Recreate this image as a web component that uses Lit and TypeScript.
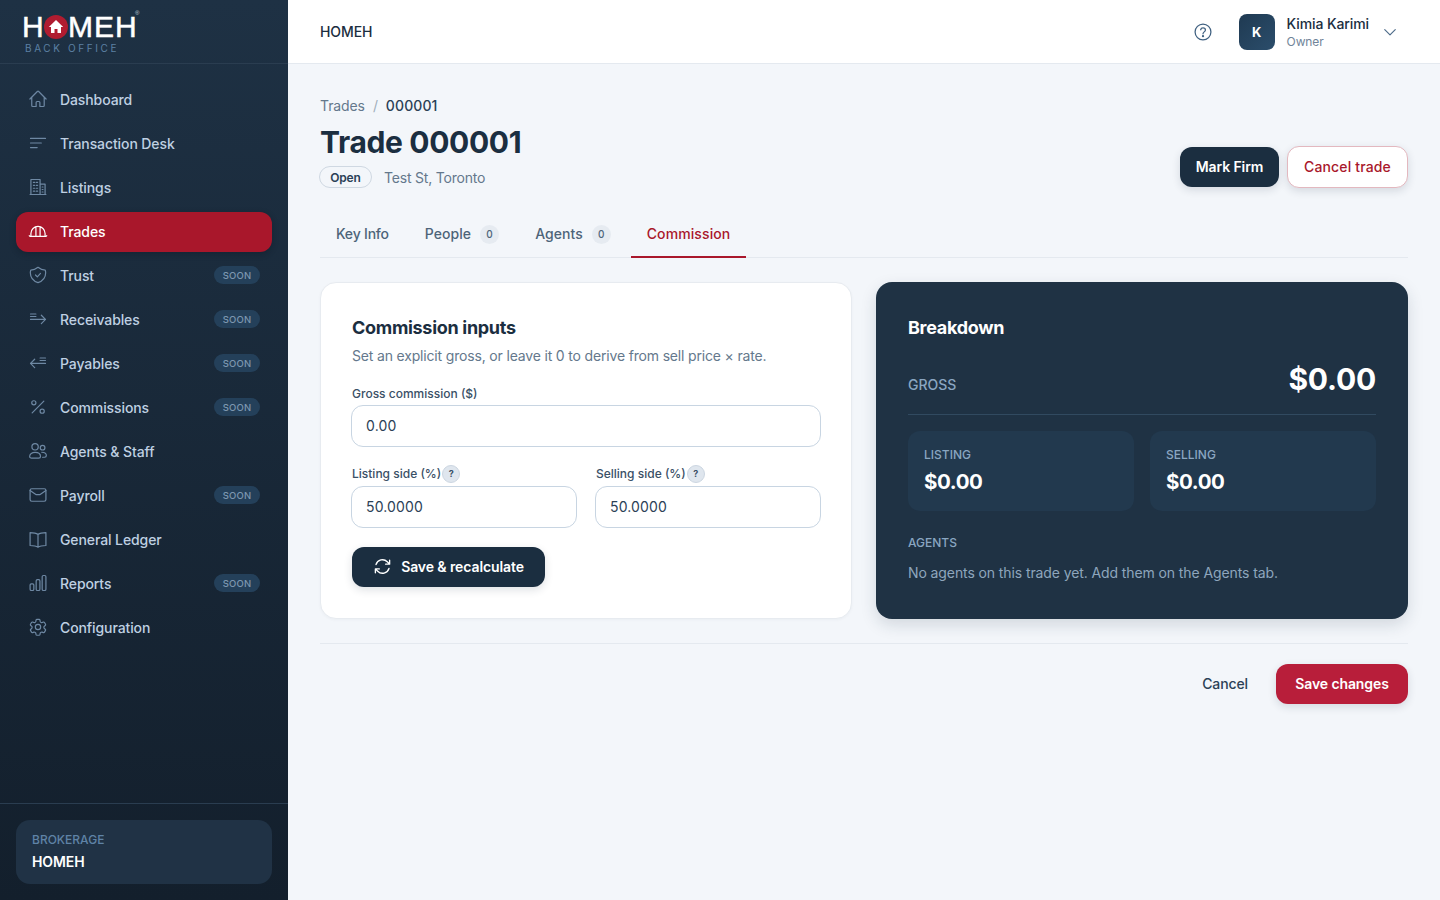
import { LitElement, html, css, svg } from "lit";
import { customElement } from "lit/decorators.js";

const ic = (b: any) => html`<svg class="ic" viewBox="0 0 24 24" fill="none" stroke="currentColor" stroke-width="1.45" stroke-linecap="round" stroke-linejoin="round">${b}</svg>`;
const icons: Record<string, any> = {
  home: svg`<path d="M2.300 12 11.200 3c.5-.4 1.200-.4 1.600 0l8.900 9M4.500 9.800v10c0 .6.500 1.200 1.100 1.200H9.750v-4.900c0-.6.500-1.100 1.100-1.100h2.300c.6 0 1.100.500 1.100 1.100V21h4.100c.6 0 1.100-.600 1.100-1.200v-10"/>`,
  desk: svg`<path d="M3 6.500h18M3 12h13M3 17.500h8"/>`,
  list: svg`<path d="M2.500 21h19M3.500 21V3h11v18M14.500 8.500h6V21M6.500 6.500h1.500M10 6.500h1.500M6.500 10h1.500M10 10h1.500M6.500 13.500h1.500M10 13.500h1.500M6.500 17h1.500M10 17h1.500M17 12h1M17 15h1M17 18h1"/>`,
  trade: svg`<path d="M1.500 17.500c0 .6.400 1 1 1h19c.6 0 1-.4 1-1M3.500 18v-3a8.500 8.500 0 0 1 17 0v3M9.500 17.500V7M14.500 17.500V7"/>`,
  trust: svg`<path d="M12 2.800c2.600 2.200 5.500 3.300 8.700 3.300.3 1 .5 2 .5 3.200 0 5.500-3.800 10-9.200 11.900C6.600 19.300 2.800 14.800 2.800 9.300c0-1.100.2-2.200.5-3.200 3.200 0 6.100-1.100 8.700-3.300Z"/><path d="m9 12 2.200 2.200L15 10"/>`,
  recv: svg`<path d="M3 6h6.500M3 9h6.500M3 12.500h18M16 7.500l5 5-5 5"/>`,
  pay: svg`<path d="M14.500 6H21M14.500 9H21M3 12.500h18M8 7.500l-5 5 5 5"/>`,
  pct: svg`<path d="M19 5 5 19"/><circle cx="7" cy="7" r="2.500"/><circle cx="17" cy="17" r="2.500"/>`,
  agents: svg`<circle cx="8.500" cy="7" r="3.800"/><circle cx="17.500" cy="8" r="2.800"/><path d="M2 18.500c0-2.900 2.800-4.800 6.500-4.800s6.500 1.900 6.500 4.800c0 1.200-1 2-2.200 2H4.200c-1.200 0-2.200-.8-2.200-2ZM16.500 13.500c3.200 0 5.500 1.600 5.500 4 0 1.200-.9 2-2 2h-2.500"/>`,
  payroll: svg`<rect x="2.500" y="4.500" width="19" height="15" rx="2"/><path d="M2.500 6.500 9 11c.6.400 1.300.500 1.500.500h3c.3 0 .9-.1 1.500-.5l6.500-4.500"/>`,
  ledger: svg`<path d="M12 6.500C10 5 7 4.300 2.500 4.300v15.500c4.500 0 7.500.6 9.500 2 2-1.400 5-2 9.500-2V4.300C17 4.300 14 5 12 6.500Zm0 0v15.300"/>`,
  reports: svg`<rect x="2.500" y="13" width="4.500" height="8" rx="1.500"/><rect x="9.800" y="8" width="4.500" height="13" rx="1.500"/><rect x="17" y="3" width="4.500" height="18" rx="1.500"/>`,
  config: svg`<path d="M9.600 3.900c.1-.6.600-1 1.200-1h2.400c.6 0 1.100.4 1.200 1l.2 1.400c.1.400.4.700.7.900l.5.300c.4.200.8.200 1.200.1l1.300-.5c.6-.2 1.200 0 1.500.5l1.200 2.100c.3.500.2 1.100-.3 1.500l-1.100.9c-.3.200-.5.600-.5 1v.6c0 .4.200.8.500 1l1.100.9c.5.400.6 1 .3 1.500l-1.200 2.100c-.3.500-.9.700-1.500.5l-1.300-.5c-.4-.1-.8-.1-1.200.1l-.5.300c-.3.200-.6.500-.7.900l-.2 1.400c-.1.600-.6 1-1.200 1h-2.400c-.6 0-1.100-.4-1.200-1l-.2-1.400c-.1-.4-.4-.7-.7-.9l-.5-.3c-.4-.2-.8-.2-1.200-.1l-1.300.5c-.6.200-1.200 0-1.500-.5l-1.200-2.100c-.3-.5-.2-1.100.3-1.500l1.100-.9c.3-.2.500-.6.500-1v-.6c0-.4-.2-.8-.5-1l-1.100-.9c-.5-.4-.6-1-.3-1.500l1.200-2.100c.3-.5.900-.7 1.500-.5l1.300.5c.4.100.8.100 1.200-.1l.5-.3c.3-.2.600-.5.700-.9Z"/><circle cx="12" cy="12" r="3.200"/>`,
};

const nav = [
  ["home", "Dashboard", 0], ["desk", "Transaction Desk", 0], ["list", "Listings", 0], ["trade", "Trades", 0],
  ["trust", "Trust", 1], ["recv", "Receivables", 1], ["pay", "Payables", 1], ["pct", "Commissions", 1],
  ["agents", "Agents & Staff", 0], ["payroll", "Payroll", 1], ["ledger", "General Ledger", 0], ["reports", "Reports", 1], ["config", "Configuration", 0],
] as const;

@customElement("app-root")
export class AppRoot extends LitElement {
  static styles = css`
    :host { display: block; width: 1440px; height: 900px; overflow: hidden; background: #f3f6fa; font-family: "Inter", "Noto Sans", sans-serif; color: #1b2e40; letter-spacing: -0.1px; }
    * { box-sizing: border-box; }
    .shell { display: flex; height: 900px; }
    .side { width: 288px; flex: none; display: flex; flex-direction: column; background: linear-gradient(180deg, #1e3144 0%, #131f2c 100%); }
    .brand { height: 64px; flex: none; border-bottom: 1px solid #2a3d50; padding: 13px 0 0 22px; }
    .logo { display: flex; align-items: center; height: 27px; color: #fff; font: 400 30px/27px "Liberation Sans", sans-serif; letter-spacing: 0; position: relative; width: 118px; -webkit-text-stroke: 0.5px #fff; }
    .logo .dot { width: 24px; height: 24px; flex: none; margin-left: 0.3px; }
    .logo .rest { letter-spacing: 1px; }
    .logo sup { position: absolute; left: 113px; top: -3px; font-size: 6px; line-height: 6px; color: #c5ced8; -webkit-text-stroke: 0; }
    .bo { font: 400 10px/12px "Inter", sans-serif; letter-spacing: 2.6px; color: #5c80a3; margin: 2px 0 0 3px; }
    nav { flex: 1; padding: 16px 16px 0; display: flex; flex-direction: column; gap: 4px; }
    .item { height: 40px; border-radius: 12px; display: flex; align-items: center; padding: 0 12px 2px 12px; gap: 12px; font-size: 14px; font-weight: 500; color: #bfd0e2; }
    .item .ic { width: 20px; height: 20px; color: #6e88a3; flex: none; }
    .item .lbl { flex: 1; }
    .item.active { background: #a9172b; color: #fff; box-shadow: 0 2px 6px rgba(10,15,25,.3); }
    .item.active .ic { color: #fff; }
    .soon { width: 46px; height: 18px; border-radius: 9px; background: #24405a; color: #7d97b0; font-size: 9.5px; font-weight: 500; display: flex; align-items: center; justify-content: center; letter-spacing: .2px; }
    .foot { height: 97px; flex: none; border-top: 1px solid #2a3d50; padding: 16px; }
    .bk { height: 64px; border-radius: 14px; background: #203245; padding: 12px 16px; }
    .bk .a { font-size: 12px; line-height: 16px; font-weight: 500; color: #5f83a6; letter-spacing: 0; }
    .bk .b { font-size: 14px; line-height: 20px; font-weight: 600; color: #fff; margin-top: 4px; }
    .main { flex: 1; display: flex; flex-direction: column; min-width: 0; }
    header { height: 64px; flex: none; background: #fff; border-bottom: 1px solid #e4e9ef; display: flex; align-items: center; padding: 0 32px; font-size: 14px; font-weight: 500; }
    header .t { flex: 1; }
    .help { width: 20px; height: 20px; color: #3f6080; margin-right: 26px; }
    .user { display: flex; align-items: center; gap: 12px; }
    .who { padding-top: 2px; }
    .av { width: 36px; height: 36px; border-radius: 8px; background: linear-gradient(135deg, #1f3a52, #2b4d6b); color: #fff; font-size: 13px; font-weight: 700; display: flex; align-items: center; justify-content: center; }
    .nm { font-size: 14px; line-height: 18px; font-weight: 500; color: #1b2e40; }
    .rl { font-size: 12px; line-height: 16px; font-weight: 400; color: #708499; margin-top: 1px; }
    .chev { width: 14px; height: 14px; color: #4f6d8a; margin: 0 11px 0 2px; }
    .content { flex: 1; padding: 32px 32px 0; }
    .head { display: flex; justify-content: space-between; align-items: flex-end; height: 94px; }
    .head > div:first-child { align-self: flex-start; }
    .crumb { font-size: 14px; line-height: 20px; color: #64788c; display: flex; gap: 8px; }
    .crumb b { font-weight: 500; color: #2b4156; letter-spacing: .1px; }
    .crumb i { font-style: normal; color: #a0aebb; }
    h1 { margin: 8px 0 6px; font-size: 30px; line-height: 36px; font-weight: 700; color: #1b2e40; letter-spacing: -0.35px; }
    .meta { display: flex; align-items: center; gap: 12px; font-size: 14px; color: #64788c; letter-spacing: -0.2px; }
    .pill { margin-left: -1px; width: 53px; height: 22px; border: 1px solid #cfd8e2; border-radius: 11px; display: flex; align-items: center; justify-content: center; font-size: 12px; font-weight: 600; color: #2b4156; }
    .acts { display: flex; gap: 8px; margin-bottom: 2px; }
    .btn { height: 40px; border-radius: 12px; display: flex; align-items: center; justify-content: center; padding-bottom: 2px; font-size: 14px; font-weight: 600; box-shadow: 0 3px 8px rgba(27,46,64,.14); }
    .dark { background: #1b2e40; color: #fff; }
    .mf { width: 99px; }
    .ct { width: 121px; height: 42px; margin-top: -1px; background: #fff; color: #a9172b; border: 1px solid #e3b8bf; font-weight: 500; letter-spacing: .15px; }
    .tabs { display: flex; gap: 4px; height: 46px; margin-top: 22px; border-bottom: 1px solid #e4e9ef; font-size: 14px; font-weight: 500; color: #4d6479; letter-spacing: 0.05px; }
    .tab { padding: 0 16px 2px; display: flex; align-items: center; gap: 9px; height: 46px; border-bottom: 2px solid transparent; }
    .tab:first-child { letter-spacing: -0.2px; }
    .tab.on { color: #a9172b; border-bottom-color: #a9172b; letter-spacing: .1px; }
    .cnt { width: 19px; height: 19px; border-radius: 50%; background: #e6ebf1; font-size: 10px; display: flex; align-items: center; justify-content: center; margin-top: 2px; }
    .grid { display: grid; grid-template-columns: 1fr 1fr; gap: 24px; margin-top: 24px; height: 337px; }
    .card { border-radius: 16px; padding: 32px; }
    .light { background: #fff; border: 1px solid #e7ebf0; box-shadow: 0 1px 3px rgba(27,46,64,.04); padding: 31px 30px; }
    .light h2, .light .sub, .lab { padding-left: 1px; }
    h2 { margin: 0; font-size: 18px; line-height: 28px; font-weight: 700; letter-spacing: -0.3px; }
    .sub { font-size: 14px; line-height: 20px; color: #64788c; margin-top: 4px; letter-spacing: -0.17px; }
    .lab { display: flex; align-items: center; gap: 1px; font-size: 12px; line-height: 16px; font-weight: 500; color: #3a5066; height: 18px; letter-spacing: 0; }
    .q { width: 18px; height: 18px; border-radius: 50%; background: #dfe6ee; border: 1px solid #ccd6e1; font-size: 9px; font-weight: 700; display: flex; align-items: center; justify-content: center; color: #3a5066; }
    .inp { height: 42px; border: 1px solid #c8d5e2; border-radius: 12px; background: #fff; display: flex; align-items: center; padding: 0 14px 2px; font-size: 14px; color: #2b4156; margin-top: 3px; letter-spacing: .15px; }
    .f1 { margin-top: 19px; }
    .f1 .inp { margin-top: 2px; }
    .two { display: grid; grid-template-columns: 1fr 1fr; gap: 18px; margin-top: 18px; }
    .sv { width: 193px; height: 40px; margin: 19px 0 0 1px; gap: 9px; }
    .sv svg { width: 19px; height: 19px; }
    .bd { background: #1f3244; color: #fff; box-shadow: 0 6px 16px rgba(27,46,64,.15); }
    .gr { display: flex; justify-content: space-between; align-items: flex-start; border-bottom: 1px solid #314a60; margin-top: 19px; padding-bottom: 17px; }
    .gr .l { font-size: 14px; line-height: 18px; margin-top: 15px; font-weight: 500; color: #8aa6c1; letter-spacing: 0; }
    .gr .v { font-size: 30px; line-height: 36px; font-weight: 700; letter-spacing: -0.2px; }
    .sp { display: grid; grid-template-columns: 1fr 1fr; gap: 16px; margin-top: 16px; }
    .sc { height: 80px; border-radius: 12px; background: #22394e; padding: 16px; }
    .sc .l { font-size: 12px; line-height: 16px; font-weight: 500; color: #8aa6c1; letter-spacing: 0; }
    .sc .v { font-size: 20.5px; line-height: 28px; font-weight: 700; margin-top: 5px; letter-spacing: -0.4px; }
    .ag { font-size: 12px; line-height: 16px; font-weight: 500; color: #8aa6c1; margin-top: 24px; letter-spacing: 0; }
    .no { font-size: 14px; line-height: 20px; color: #8ea6bd; margin-top: 12px; }
    .end { margin-top: 24px; border-top: 1px solid #e4e9ef; padding-top: 20px; display: flex; justify-content: flex-end; align-items: center; gap: 28px; }
    .cancel { font-size: 14px; font-weight: 500; color: #2b4156; padding-bottom: 2px; }
    .save { width: 132px; background: #b81e3a; color: #fff; }
  `;

  private field(label: string, val: string, q = false) {
    return html`<div><div class="lab">${label}${q ? html`<span class="q">?</span>` : ""}</div><div class="inp">${val}</div></div>`;
  }

  render() {
    return html`<div class="shell">
      <aside class="side">
        <div class="brand">
          <div class="logo">H<svg class="dot" viewBox="0 0 24 24"><circle cx="12" cy="12" r="12" fill="#b01c30"/><path d="M12 5 4.800 12h2.200v6h3.500v-4h3v4H17v-6h2.200Z" fill="#fff"/></svg><span class="rest">MEH</span><sup>®</sup></div>
          <div class="bo">BACK OFFICE</div>
        </div>
        <nav>
          ${nav.map(([i, l, s]) => html`<div class="item ${l === "Trades" ? "active" : ""}">${ic(icons[i])}<span class="lbl">${l}</span>${s ? html`<span class="soon">SOON</span>` : ""}</div>`)}
        </nav>
        <div class="foot"><div class="bk"><div class="a">BROKERAGE</div><div class="b">HOMEH</div></div></div>
      </aside>
      <div class="main">
        <header>
          <div class="t">HOMEH</div>
          <svg class="help" viewBox="0 0 24 24" fill="none" stroke="currentColor" stroke-width="1.5" stroke-linecap="round"><circle cx="12" cy="12" r="9.500"/><path d="M9.200 9.300c.3-1.400 1.400-2.200 2.800-2.200 1.600 0 2.900 1 2.900 2.500 0 2.300-2.900 2.200-2.900 4.500"/><circle cx="12" cy="17" r=".6" fill="currentColor"/></svg>
          <div class="user">
            <div class="av">K</div>
            <div class="who"><div class="nm">Kimia Karimi</div><div class="rl">Owner</div></div>
            <svg class="chev" viewBox="0 0 24 24" fill="none" stroke="currentColor" stroke-width="2" stroke-linecap="round" stroke-linejoin="round"><path d="m3 8 9 9 9-9"/></svg>
          </div>
        </header>
        <div class="content">
          <div class="head">
            <div>
              <div class="crumb"><span>Trades</span><i>/</i><b>000001</b></div>
              <h1>Trade 000001</h1>
              <div class="meta"><span class="pill">Open</span><span>Test St, Toronto</span></div>
            </div>
            <div class="acts"><div class="btn dark mf">Mark Firm</div><div class="btn ct">Cancel trade</div></div>
          </div>
          <div class="tabs">
            <div class="tab">Key Info</div>
            <div class="tab">People <span class="cnt">0</span></div>
            <div class="tab">Agents <span class="cnt">0</span></div>
            <div class="tab on">Commission</div>
          </div>
          <div class="grid">
            <section class="card light">
              <h2>Commission inputs</h2>
              <div class="sub">Set an explicit gross, or leave it 0 to derive from sell price × rate.</div>
              <div class="f1">${this.field("Gross commission ($)", "0.00")}</div>
              <div class="two">${this.field("Listing side (%)", "50.0000", true)}${this.field("Selling side (%)", "50.0000", true)}</div>
              <div class="btn dark sv"><svg viewBox="0 0 24 24" fill="none" stroke="currentColor" stroke-width="1.7" stroke-linecap="round" stroke-linejoin="round"><path d="M16 9h5V4M21 9l-3-3a8.500 8.500 0 0 0-14.200 3.500M8 15H3v5M3 15l3 3a8.500 8.500 0 0 0 14.200-3.500"/></svg>Save &amp; recalculate</div>
            </section>
            <section class="card bd">
              <h2>Breakdown</h2>
              <div class="gr"><span class="l">GROSS</span><span class="v">$0.00</span></div>
              <div class="sp">
                <div class="sc"><div class="l">LISTING</div><div class="v">$0.00</div></div>
                <div class="sc"><div class="l">SELLING</div><div class="v">$0.00</div></div>
              </div>
              <div class="ag">AGENTS</div>
              <div class="no">No agents on this trade yet. Add them on the Agents tab.</div>
            </section>
          </div>
          <div class="end"><span class="cancel">Cancel</span><div class="btn save">Save changes</div></div>
        </div>
      </div>
    </div>`;
  }
}
